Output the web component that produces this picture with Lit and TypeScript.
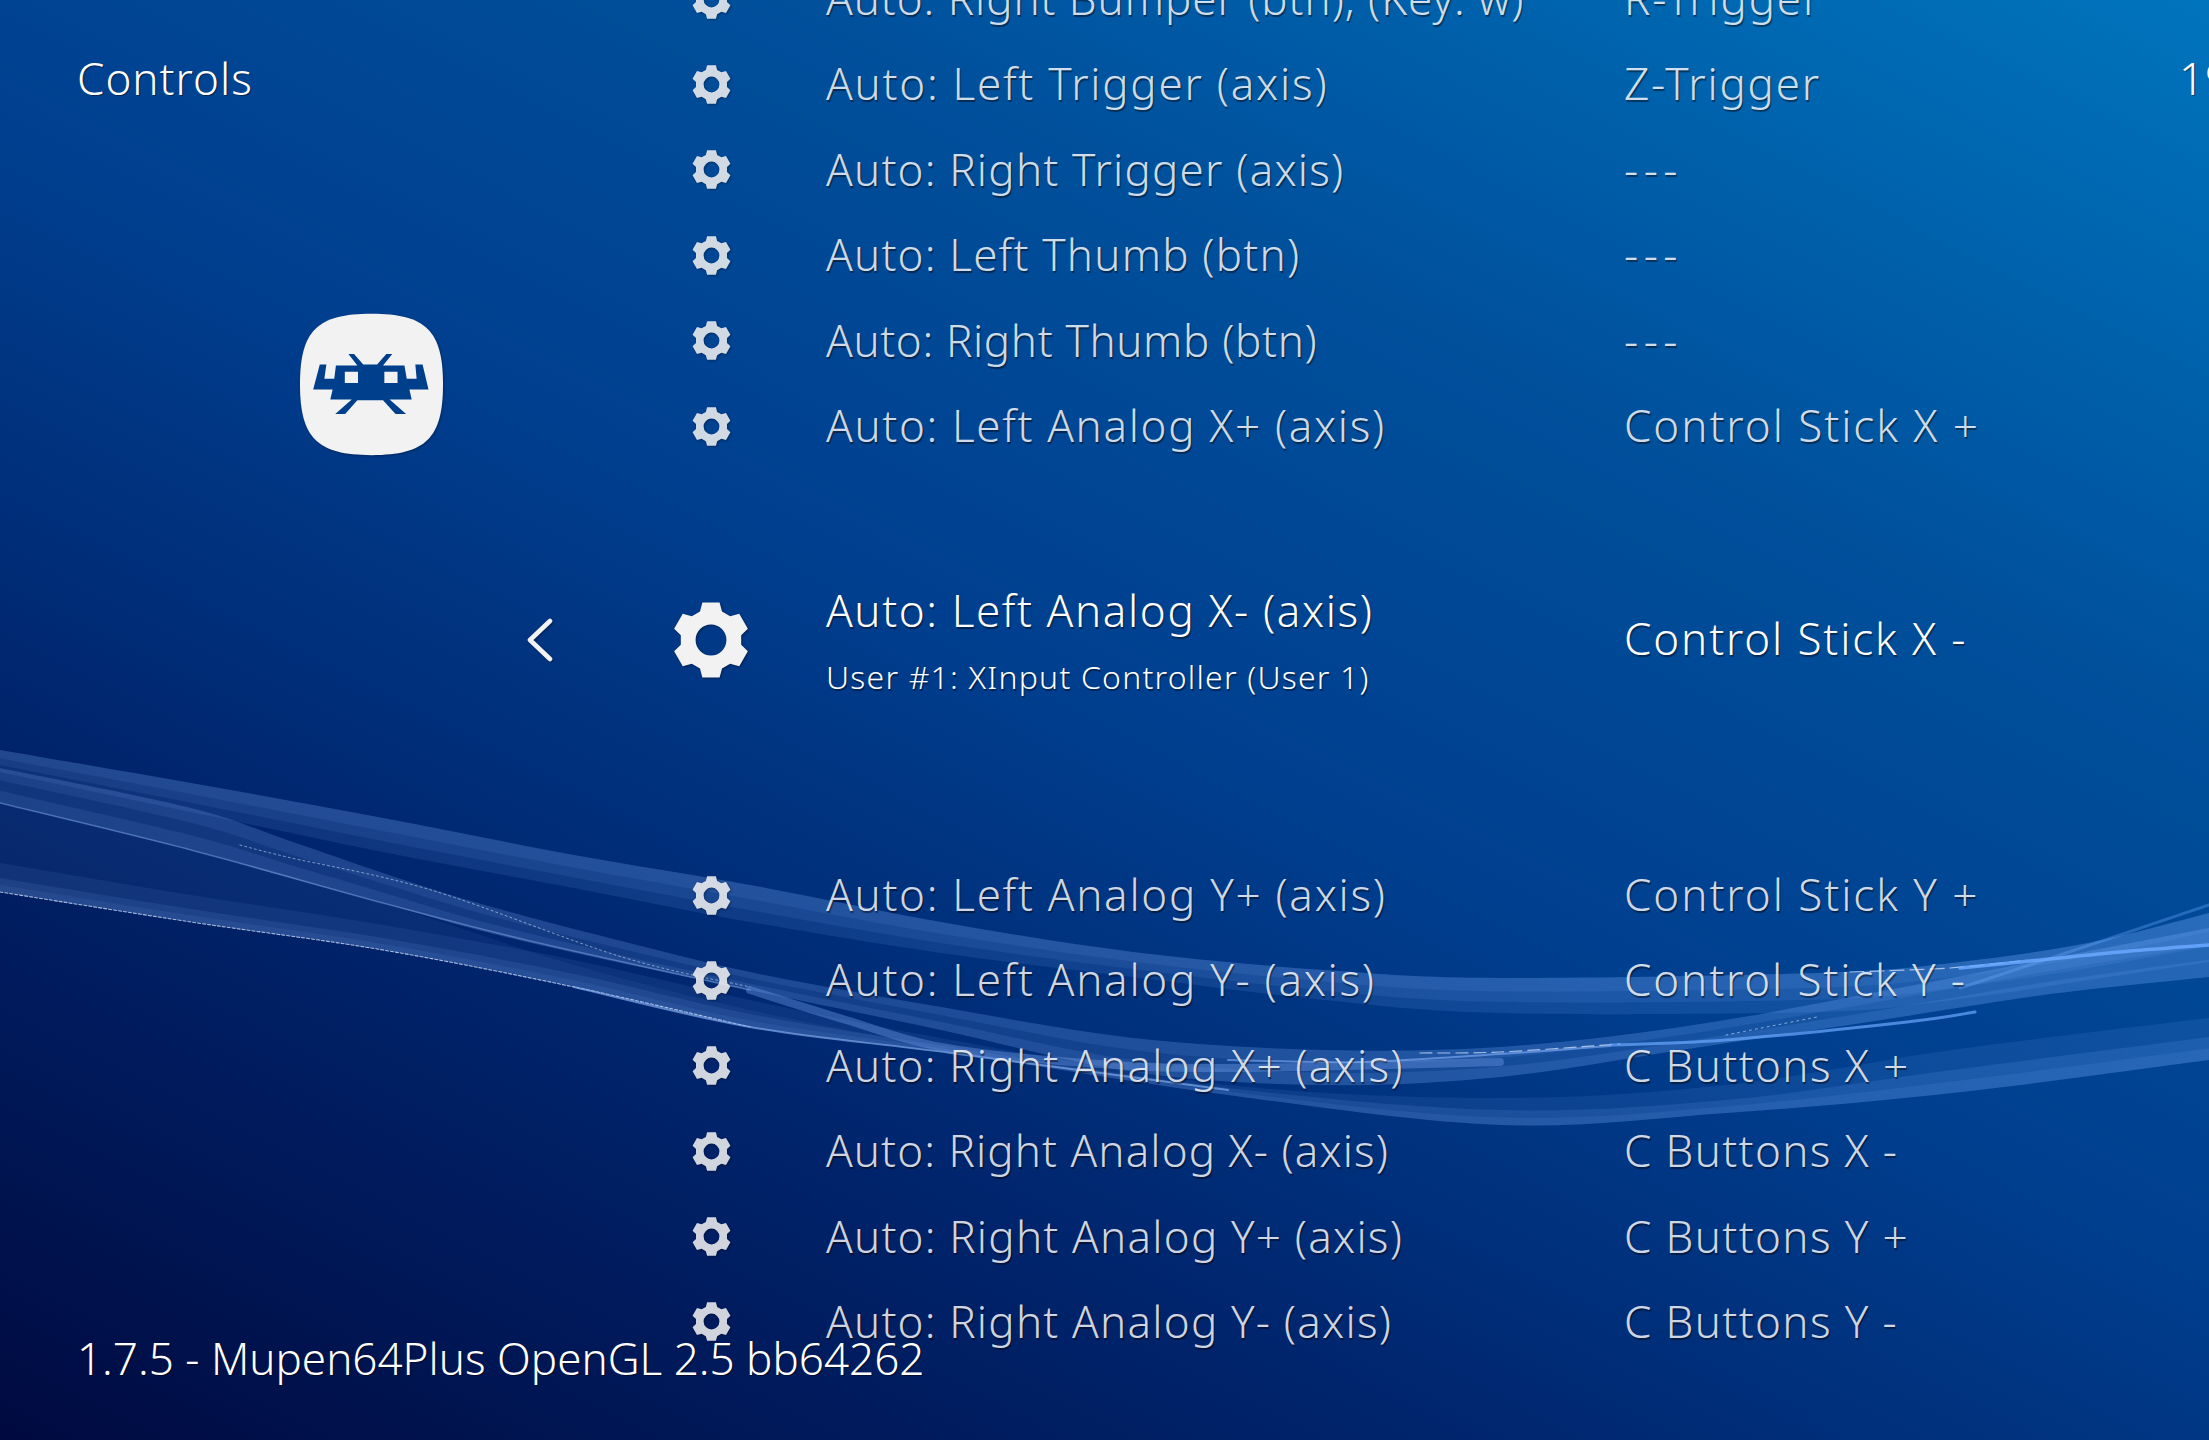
import { LitElement, html, css, svg } from "lit";
import { customElement } from "lit/decorators.js";

type P = [number, number];

function gearPath(): string {
  const pts: P[] = [];
  for (let k = 0; k < 6; k++) {
    const a = ((90 - 60 * k) * Math.PI) / 180;
    const dx = Math.cos(a), dy = -Math.sin(a);
    const px = -dy, py = dx;
    const pt = (r: number, w: number): P => [r * dx + w * px, r * dy + w * py];
    pts.push(pt(28.5, -11), pt(37.6, -8.6), pt(37.6, 8.6), pt(28.5, 11));
  }
  let d = "M" + pts.map((p) => `${p[0].toFixed(2)} ${p[1].toFixed(2)}`).join("L") + "Z";
  d += "M15.4 0A15.4 15.4 0 1 0 -15.4 0A15.4 15.4 0 1 0 15.4 0Z";
  return d;
}
const GEAR = gearPath();
const gear = (cls: string) => html`<svg class=${cls} viewBox="-38 -38 76 76"><path fill-rule="evenodd" d=${GEAR}></path></svg>`;

/* Smooth curve through points (Catmull-Rom to Bezier). */
function curve(p: P[], move = true): string {
  let d = (move ? "M" : "L") + `${p[0][0]} ${p[0][1]}`;
  for (let i = 0; i < p.length - 1; i++) {
    const a = p[Math.max(i - 1, 0)], b = p[i], c = p[i + 1], e = p[Math.min(i + 2, p.length - 1)];
    const c1: P = [b[0] + (c[0] - a[0]) / 6, b[1] + (c[1] - a[1]) / 6];
    const c2: P = [c[0] - (e[0] - b[0]) / 6, c[1] - (e[1] - b[1]) / 6];
    d += `C${c1[0].toFixed(1)} ${c1[1].toFixed(1)} ${c2[0].toFixed(1)} ${c2[1].toFixed(1)} ${c[0]} ${c[1]}`;
  }
  return d;
}
const lerp = (a: P[], b: P[], t: number): P[] => a.map((p, i) => [p[0] + (b[i][0] - p[0]) * t, p[1] + (b[i][1] - p[1]) * t] as P);
function area(top: P[], bot: P[], t0: number, t1: number): string {
  const a = lerp(top, bot, t0), b = lerp(top, bot, t1).reverse();
  return curve(a) + curve(b, false) + "Z";
}

const B1T: P[] = [[0,750],[191,783],[383,818],[574,855],[750,885],[941,922],[1133,952],[1324,970],[1500,978],[1817,973],[1952,963],[2088,943],[2209,913]];
const B1B: P[] = [[0,772],[191,812],[383,852],[574,888],[750,922],[941,953],[1133,977],[1324,1000],[1500,1013],[1817,1012],[1952,1000],[2088,980],[2209,962]];
const B2T: P[] = [[0,768],[191,808],[287,840],[383,873],[478,903],[598,935],[750,972],[941,1007],[1133,1038],[1324,1050],[1500,1047],[1681,1027],[1862,995],[2043,960],[2209,928]];
const B2B: P[] = [[0,803],[191,850],[287,877],[383,903],[478,930],[598,958],[750,990],[941,1030],[1133,1072],[1324,1085],[1500,1077],[1681,1050],[1862,1023],[2043,995],[2209,977]];
const B3T: P[] = [[0,863],[191,895],[383,925],[574,960],[750,1000],[951,1040],[1228,1085],[1500,1098],[1726,1085],[1952,1050],[2209,1018]];
const B3M: P[] = [[0,878],[191,909],[383,938],[574,974],[750,1014],[951,1047],[1228,1088],[1500,1110],[1726,1100],[1952,1070],[2209,1037]];
const B3B: P[] = [[0,892],[191,922],[383,950],[574,987],[750,1027],[951,1053],[1228,1095],[1500,1125],[1726,1113],[1952,1093],[2209,1060]];
const WEBT: P[] = [[0,803],[191,850],[383,903],[574,965],[750,1010],[950,1050]];
const WEBB: P[] = [[0,892],[191,922],[383,950],[574,987],[750,1027],[950,1053]];

const fills: [string, number][] = [
  [area(B1T, B1B, 0, 1), 0.16],
  [area(B1T, B1B, 0, 0.68), 0.13],
  [area(B1T, B1B, 0, 0.38), 0.13],
  [area(WEBT, WEBB, 0, 1), 0.09],
  [area(B2T, B2B, 0, 1), 0.2],
  [area(B2T, B2B, 0, 0.35), 0.14],
  [area(B2T, B2B, 0.65, 1), 0.16],
  [area(B3T, B3B, 0, 1), 0.12],
  [area(B3M, B3B, 0, 1), 0.16],
  [area(B3M, B3B, 0.5, 1), 0.12],
];

const lines: { d: P[]; c: string; w: number; o: number; dash?: string }[] = [
  { d: WEBB.slice(0, 5), c: "#d8e6ff", w: 1.1, o: 0.75, dash: "3 2" },
  { d: [[574,987],[750,1027],[951,1053],[1228,1090]], c: "#7fa8ea", w: 2, o: 0.7 },
  { d: [[0,803],[191,850],[383,903],[526,940],[750,990]], c: "#8fb0ea", w: 1.6, o: 0.45 },
  { d: [[240,845],[287,857],[431,890],[622,957],[750,987]], c: "#dce9ff", w: 1, o: 0.55, dash: "2 3" },
  { d: [[750,990],[846,1020],[941,1047],[1085,1063],[1228,1068],[1500,1062]], c: "#6f9be8", w: 8, o: 0.4 },
  { d: [[1228,1060],[1360,1062],[1500,1054],[1610,1046]], c: "#8fb8ff", w: 2, o: 0.55 },
  { d: [[1420,1053],[1500,1052],[1620,1044]], c: "#dcebff", w: 1.2, o: 0.7, dash: "12 6" },
  { d: [[1610,1045],[1726,1040],[1907,1022],[1975,1012]], c: "#6aa8ff", w: 3, o: 0.7 },
  { d: [[1726,1035],[1817,1017]], c: "#dcebff", w: 1, o: 0.6, dash: "2 4" },
  { d: [[1850,972],[1950,968],[2020,961]], c: "#dcebff", w: 1.2, o: 0.7, dash: "14 6" },
  { d: [[1960,968],[2020,962],[2120,952],[2209,945]], c: "#6aa8ff", w: 3.5, o: 0.85 },
  { d: [[1960,988],[2060,955],[2209,905]], c: "#6aa8ff", w: 3, o: 0.35 },
];

/* ls / vs: per-row tracking, tuned to the width each string has in the reference. */
interface Row { label: string; value: string; ls: number; vs: number; selected?: boolean; sub?: string }
const ROWS: Row[] = [
  { label: "Auto: Right Bumper (btn), (Key: w)", value: "R-Trigger", ls: 0.93, vs: 1.8 },
  { label: "Auto: Left Trigger (axis)", value: "Z-Trigger", ls: 1.75, vs: 1.8 },
  { label: "Auto: Right Trigger (axis)", value: "---", ls: 1.2, vs: 5.5 },
  { label: "Auto: Left Thumb (btn)", value: "---", ls: 1.2, vs: 5.5 },
  { label: "Auto: Right Thumb (btn)", value: "---", ls: 0.64, vs: 5.5 },
  { label: "Auto: Left Analog X+ (axis)", value: "Control Stick X +", ls: 1.65, vs: 1.95 },
  { label: "Auto: Left Analog X- (axis)", value: "Control Stick X -", ls: 1.6, vs: 1.85, selected: true, sub: "User #1: XInput Controller (User 1)" },
  { label: "Auto: Left Analog Y+ (axis)", value: "Control Stick Y +", ls: 1.7, vs: 1.95 },
  { label: "Auto: Left Analog Y- (axis)", value: "Control Stick Y -", ls: 1.7, vs: 1.85 },
  { label: "Auto: Right Analog X+ (axis)", value: "C Buttons X +", ls: 1.2, vs: 1.37 },
  { label: "Auto: Right Analog X- (axis)", value: "C Buttons X -", ls: 1.07, vs: 1.35 },
  { label: "Auto: Right Analog Y+ (axis)", value: "C Buttons Y +", ls: 1.2, vs: 1.37 },
  { label: "Auto: Right Analog Y- (axis)", value: "C Buttons Y -", ls: 1.2, vs: 1.37 },
];

@customElement("app-root")
export class AppRoot extends LitElement {
  static styles = css`
    :host {
      display: block;
      position: relative;
      width: 2209px;
      height: 1440px;
      overflow: hidden;
      font-family: "Noto Sans", sans-serif;
      font-weight: 300;
      color: #fff;
      background: linear-gradient(207deg, #0074bd 0%, #00509c 28%, #003e8e 50%, #00246c 72%, #000a40 100%);
    }
    .ribbons { position: absolute; inset: 0; width: 2209px; height: 1440px; }
    .page { position: relative; display: grid; grid-template-columns: 527px 1fr; height: 1440px; }
    .side { display: flex; flex-direction: column; align-items: flex-start; }
    .title { margin: 47px 0 0 77px; font-size: 44px; letter-spacing: 1px; line-height: 62px; text-shadow: 1px 1px 1px rgba(0,0,0,.45); }
    .logo { width: 143px; height: 143px; margin: 204px 0 0 300px; filter: drop-shadow(1px 1px 1px rgba(0,0,0,.3)); }
    .list { margin-top: -43.6px; display: flex; flex-direction: column; }
    .row {
      display: grid;
      grid-template-columns: 145px 78px 874px 1fr;
      align-items: center;
      height: 85.4px;
      flex: none;
      font-size: 44px;
      color: rgba(255,255,255,.82);
      text-shadow: 1px 2px 1px rgba(0,0,0,.45);
    }
    .row.sel { height: 120px; margin: 111.3px 0 152.3px; color: #fff; }
    .chev { width: 26px; height: 44px; fill: none; stroke: #f2f2f2; stroke-width: 4.6; stroke-linecap: round; stroke-linejoin: round; filter: drop-shadow(1px 1px 1px rgba(0,0,0,.4)); }
    .gear-s { width: 39px; height: 39px; justify-self: center; fill: rgba(255,255,255,.82); filter: drop-shadow(1px 1px 1px rgba(0,0,0,.4)); }
    .gear-l { width: 76px; height: 76px; justify-self: center; fill: #f2f2f2; filter: drop-shadow(1px 1px 1px rgba(0,0,0,.4)); }
    .label { padding: 0 0 2px 76px; white-space: nowrap; }
    .value { padding-bottom: 2px; white-space: nowrap; }
    .sel .value { padding-bottom: 4px; }
    .main { display: block; line-height: 58px; }
    .sub { display: block; font-size: 32px; letter-spacing: 1.2px; line-height: 40px; margin-top: 18px; }
    .foot { position: absolute; left: 77px; top: 1327px; font-size: 44px; line-height: 62px; text-shadow: 1px 1px 1px rgba(0,0,0,.5); white-space: nowrap; }
    .clock { position: absolute; left: 2179px; top: 47px; font-size: 44px; letter-spacing: 1px; line-height: 62px; white-space: nowrap; text-shadow: 1px 1px 1px rgba(0,0,0,.45); }
  `;

  render() {
    return html`
      <svg class="ribbons" viewBox="0 0 2209 1440">
        <defs>
          <linearGradient id="rib" gradientUnits="userSpaceOnUse" x1="0" y1="0" x2="2209" y2="0">
            <stop offset="0" stop-color="#7aa8f0" stop-opacity=".72"></stop>
            <stop offset=".5" stop-color="#76a6f2" stop-opacity=".82"></stop>
            <stop offset="1" stop-color="#6ea6f8" stop-opacity="1"></stop>
          </linearGradient>
        </defs>
        <g fill="url(#rib)">${fills.map(([d, o]) => svg`<path d=${d} opacity=${o}></path>`)}</g>
        <g fill="none" stroke-linecap="round">
          ${lines.map((l) => svg`<path d=${curve(l.d)} stroke=${l.c} stroke-width=${l.w} opacity=${l.o} stroke-dasharray=${l.dash ?? "none"}></path>`)}
        </g>
      </svg>
      <div class="page">
        <div class="side">
          <div class="title">Controls</div>
          <svg class="logo" viewBox="88 68 434 429">
            <path fill="#f2f2f2" d="M305 68C470 68 522 120 522 282C522 445 470 497 305 497C140 497 88 445 88 282C88 120 140 68 305 68Z"/>
            <path fill="#003f8c" fill-rule="evenodd" d="M148 222H168L162 265H192L197 225H262L235 190H252L280 222H322L350 190H368L340 225H405L412 265H442L438 222H460L478 298H420L427 328H360L410 372H378L340 330H262L225 372H195L245 328H180L187 298H128ZM224 244V278H264V244ZM344 244V278H384V244Z"/>
          </svg>
        </div>
        <div class="list">
          ${ROWS.map(
            (r) => html`<div class="row ${r.selected ? "sel" : ""}">
              ${r.selected
                ? html`<svg class="chev" viewBox="0 0 26 44"><path d="M23 3L3 22L23 41"></path></svg>`
                : html`<span></span>`}
              ${gear(r.selected ? "gear-l" : "gear-s")}
              <div class="label">
                <span class="main" style="letter-spacing:${r.ls}px">${r.label}</span>
                ${r.sub ? html`<span class="sub">${r.sub}</span>` : ""}
              </div>
              <div class="value" style="letter-spacing:${r.vs}px">${r.value}</div>
            </div>`
          )}
        </div>
      </div>
      <div class="foot">1.7.5 - Mupen64Plus OpenGL 2.5 bb64262</div>
      <div class="clock">19:24</div>
    `;
  }
}
